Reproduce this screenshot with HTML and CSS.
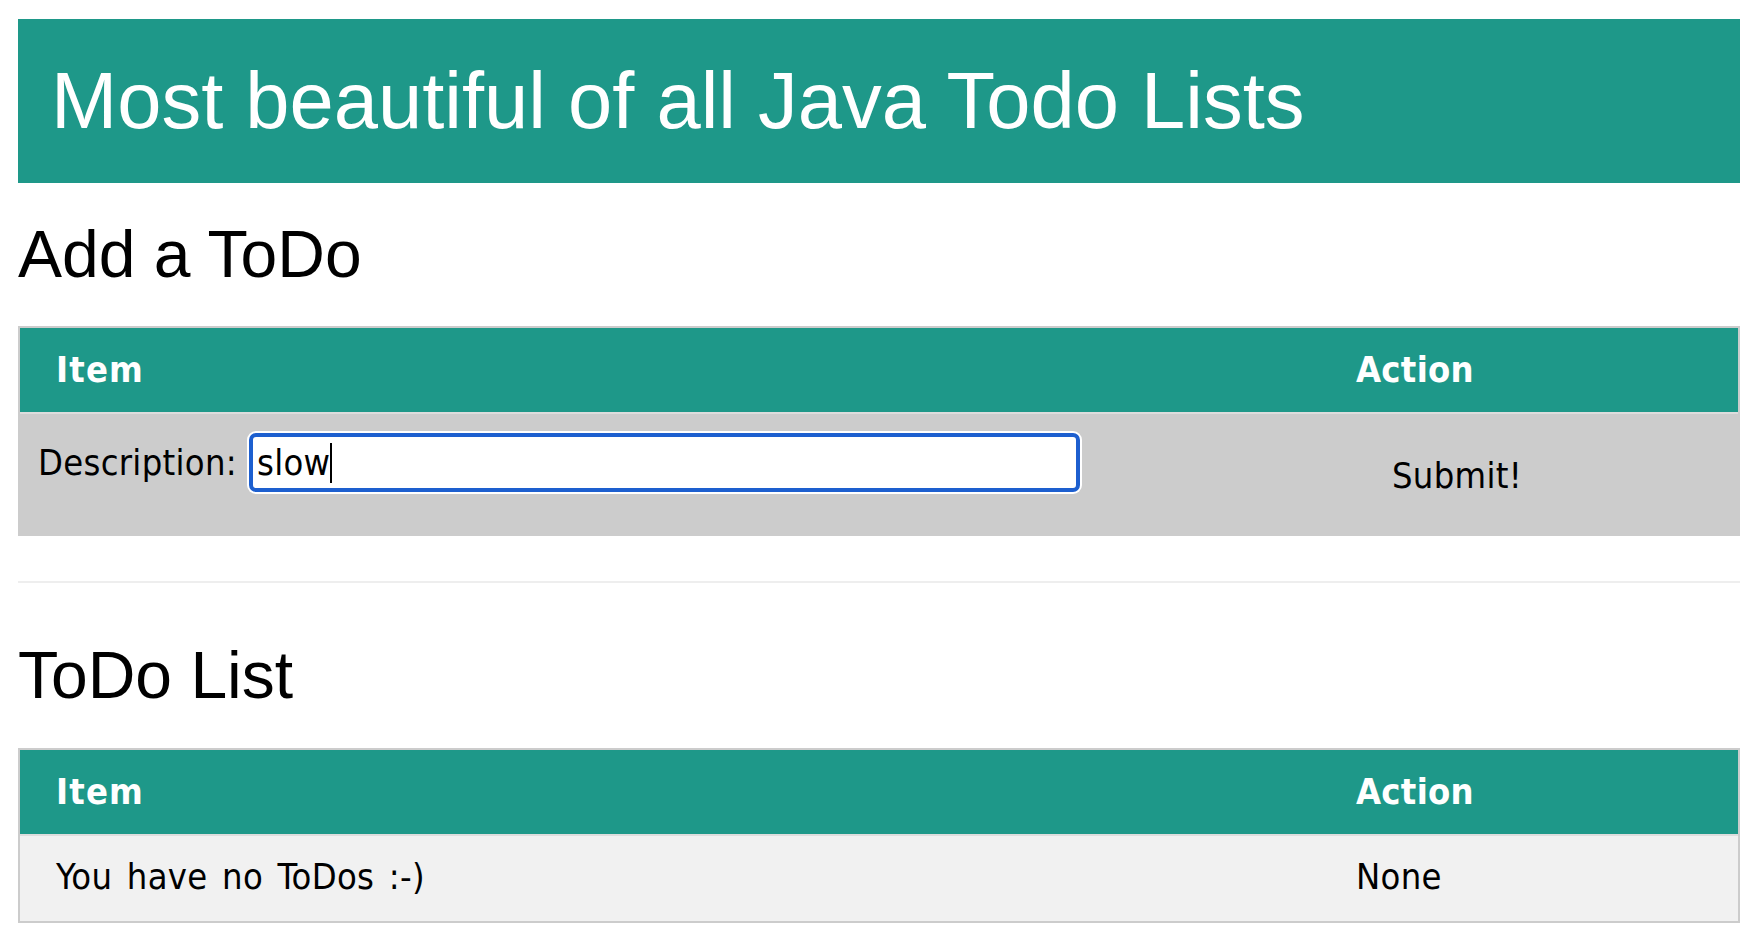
FILE: index.html
```html
<!DOCTYPE html>
<html lang="en">
<head>
<meta charset="utf-8">
<title>Java Todo List</title>
<link rel="stylesheet" href="styles.css">
</head>
<body>
  <header class="banner">
    <h1 class="banner-title">Most beautiful of all Java Todo Lists</h1>
  </header>

  <h2 class="section-title">Add a ToDo</h2>
  <form class="todo-table" onsubmit="return false;">
    <div class="row head">
      <div class="cell col-item">Item</div>
      <div class="cell col-action">Action</div>
    </div>
    <div class="row form-row">
      <div class="cell col-item form-cell">
        <label class="desc-label" for="desc">Description:</label>
        <span class="input-wrap">
          <input id="desc" class="desc-input" type="text" value="slow">
          <span class="caret"></span>
        </span>
      </div>
      <div class="cell col-action submit-cell">
        <button class="submit-btn" type="submit">Submit!</button>
      </div>
    </div>
  </form>

  <div class="divider"></div>

  <h2 class="section-title list-title">ToDo List</h2>
  <div class="todo-table">
    <div class="row head">
      <div class="cell col-item">Item</div>
      <div class="cell col-action">Action</div>
    </div>
    <div class="row item-row">
      <div class="cell col-item">You have no ToDos :-)</div>
      <div class="cell col-action">None</div>
    </div>
  </div>
</body>
</html>
```

FILE: styles.css
```css
html, body {
  background: #ffffff;
}

body {
  margin: 19px 18px 18px 18px;
  color: #000;
  font-family: "Liberation Sans", Arial, sans-serif;
}

.banner {
  background: #1e9889;
  padding: 37px 33px 37px 33px;
}

.banner-title {
  margin: 0;
  color: #ffffff;
  font-family: "Liberation Sans", Arial, sans-serif;
  font-weight: normal;
  font-size: 79.5px;
  line-height: 90px;
}

.section-title {
  margin: 34px 0 34px 0;
  font-family: "Liberation Sans", Arial, sans-serif;
  font-weight: normal;
  font-size: 66px;
  line-height: 75px;
}

.list-title {
  margin-top: 55px;
  margin-bottom: 35px;
}

.todo-table {
  display: block;
  margin: 0;
  border: 2px solid #cccccc;
  font-family: "DejaVu Sans Condensed", "DejaVu Sans", Tahoma, sans-serif;
  font-stretch: condensed;
  font-size: 36px;
  line-height: 42px;
  letter-spacing: 0.3px;
  word-spacing: 4px;
}

.row {
  display: flex;
}

.cell {
  box-sizing: border-box;
}

.col-item {
  flex: 0 0 1300px;
  padding: 0 36px;
}

.col-action {
  flex: 1 1 auto;
  padding: 0 36px;
}

.head {
  background: #1e9889;
  color: #ffffff;
  font-weight: bold;
  border-bottom: 2px solid #dddddd;
}

.head .cell {
  padding-top: 21px;
  padding-bottom: 21px;
}

.head .col-item {
  letter-spacing: 1.2px;
}

.form-row {
  background: #cccccc;
  height: 120px;
}

.form-cell {
  display: flex;
  align-items: center;
  align-self: flex-start;
  padding: 19px 18px 0 18px;
}

.desc-label {
  margin-right: 12px;
  white-space: nowrap;
}

.input-wrap {
  position: relative;
  display: block;
}

.desc-input {
  display: block;
  box-sizing: border-box;
  width: 831px;
  height: 59px;
  margin: 0;
  padding: 0 4px;
  border: 4px solid #1d5fcf;
  border-radius: 7px;
  box-shadow: 0 0 0 2px #ffffff;
  background: #ffffff;
  color: #000;
  outline: none;
  font-family: "DejaVu Sans Condensed", "DejaVu Sans", Tahoma, sans-serif;
  font-stretch: condensed;
  font-size: 36px;
  line-height: 42px;
  letter-spacing: 0.3px;
}

.caret {
  position: absolute;
  left: 81px;
  top: 10px;
  width: 2px;
  height: 40px;
  background: #000;
}

.submit-cell {
  display: flex;
  align-items: center;
  padding: 4px 0 0 0;
}

.submit-btn {
  margin: 0 0 0 36px;
  padding: 0 36px;
  border: none;
  background: transparent;
  color: #000;
  font-family: "DejaVu Sans Condensed", "DejaVu Sans", Tahoma, sans-serif;
  font-stretch: condensed;
  font-size: 36px;
  line-height: 42px;
  letter-spacing: 0.3px;
  cursor: pointer;
}

.divider {
  margin-top: 45px;
  border-top: 2px solid #eeeeee;
}

.item-row {
  background: #f1f1f1;
  height: 85px;
}

.item-row .cell {
  padding-top: 20px;
}
```
